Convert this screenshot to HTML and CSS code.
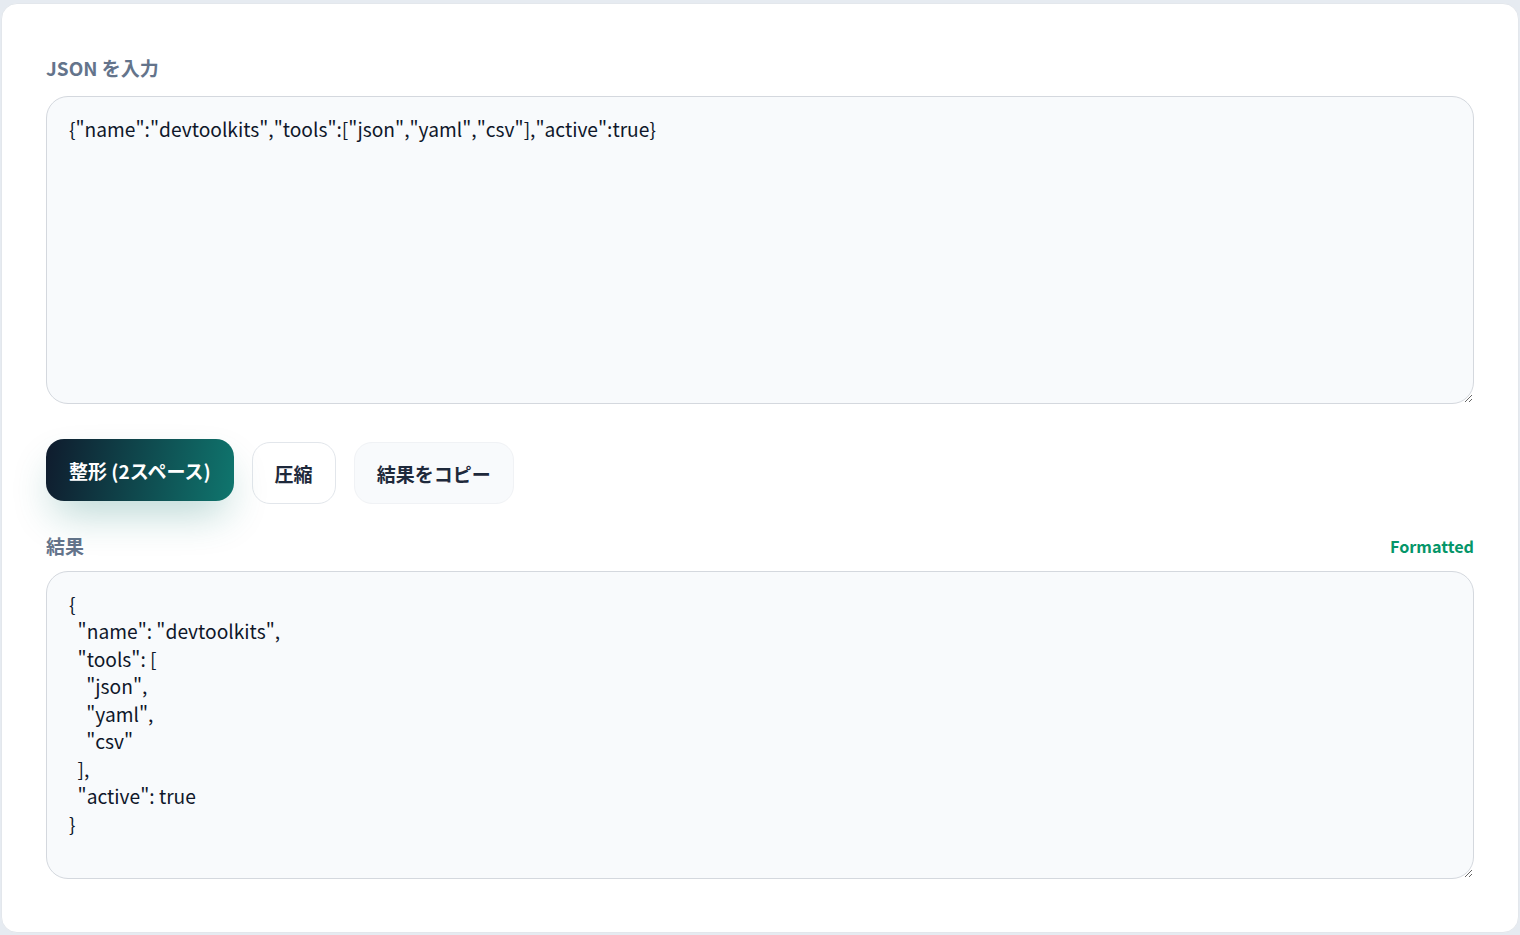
FILE: index.html
```html
<!DOCTYPE html>
<html lang="ja">
<head>
    <meta charset="UTF-8">
    <meta name="viewport" content="width=device-width, initial-scale=1.0">
    <title>JSON 整形ツール</title>
    <link rel="stylesheet" href="styles.css">
</head>
<body>
    <div class="page">
        <main class="card">
            <label class="label" for="jsonInput">JSON を入力</label>
            <textarea id="jsonInput" class="editor" spellcheck="false">{"name":"devtoolkits","tools":["json","yaml","csv"],"active":true}</textarea>

            <div class="actions">
                <button class="btn btn-primary">整形 (2スペース)</button>
                <button class="btn">圧縮</button>
                <button class="btn btn-soft">結果をコピー</button>
            </div>

            <div class="result-head">
                <span class="label">結果</span>
                <span class="status">Formatted</span>
            </div>
            <textarea class="editor" readonly>{
  "name": "devtoolkits",
  "tools": [
    "json",
    "yaml",
    "csv"
  ],
  "active": true
}</textarea>
        </main>
    </div>
</body>
</html>
```

FILE: styles.css
```css
body {
    margin: 0;
    background-color: #e6ebf1;
    font-family: "Noto Sans CJK JP", "Noto Sans", sans-serif;
    color: #0f172a;
}

.page {
    padding: 3px 1px 2px 1px;
}

.card {
    display: flex;
    flex-direction: column;
    background-color: #ffffff;
    border: 1px solid #e3e7ec;
    border-radius: 16px;
    padding: 51px 44px 53px 44px;
    height: 930px;
    box-sizing: border-box;
}

.label {
    font-size: 19px;
    font-weight: 700;
    line-height: 26px;
    color: #64748b;
}

.editor {
    display: block;
    margin-top: 15px;
    height: 308px;
    box-sizing: border-box;
    padding: 18.5px 22px 16px 22px;
    border: 1.5px solid #d4d8de;
    border-radius: 22px;
    background-color: #f8fafc;
    font-family: "Noto Sans CJK JP", "Noto Sans", sans-serif;
    font-size: 19.2px;
    line-height: 27.5px;
    color: #0f172a;
    resize: vertical;
    outline: none;
}

.actions {
    display: flex;
    gap: 18px;
    margin-top: 38px;
}

.btn {
    height: 62px;
    padding: 0 22px;
    border: 1px solid #e2e6eb;
    border-radius: 18px;
    background-color: #ffffff;
    font-family: inherit;
    font-size: 19px;
    font-weight: 700;
    color: #1e293b;
    cursor: pointer;
}

.btn-primary {
    border: none;
    padding: 0 23px;
    background: linear-gradient(100deg, #0f1b2d 0%, #0f766e 100%);
    color: #ffffff;
    transform: translateY(-3px);
    box-shadow: 0 20px 40px -8px rgba(15, 118, 110, 0.3);
}

.btn-soft {
    background-color: #f8fafc;
    border-color: #f0f2f5;
}

.result-head {
    display: flex;
    justify-content: space-between;
    align-items: center;
    margin-top: 29px;
}

.status {
    font-size: 16.2px;
    font-weight: 700;
    color: #059669;
}

.result-head + .editor {
    margin-top: 12px;
}
```
